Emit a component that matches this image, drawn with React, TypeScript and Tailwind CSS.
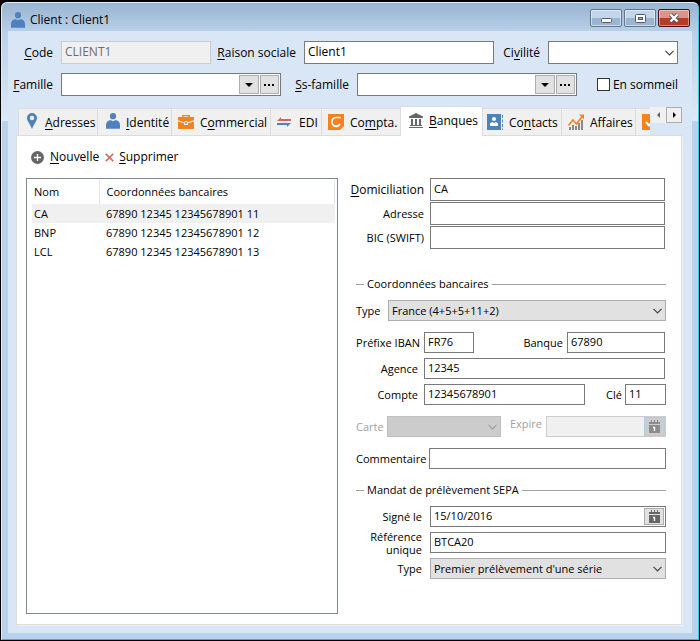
import { useState } from "react";
import type { InputHTMLAttributes, ReactNode } from "react";
import clsx from "clsx";

type IconProps = { className?: string };

function PersonIcon({ className }: IconProps) {
  return (
    <svg viewBox="0 0 14 16" className={clsx("shrink-0", className)} fill="#4f81bd">
      <circle cx="7" cy="3.2" r="3.1" />
      <path d="M0 15.8v-3.300Q0 8 3.500 7.200H5l2 1 2-1h1.500Q14 8 14 12.500v3.300z" />
    </svg>
  );
}

function PinIcon() {
  return (
    <svg viewBox="0 0 10 16" className="mb-1 h-4 w-2.5 shrink-0" fill="#4f81bd">
      <path
        fillRule="evenodd"
        d="M5 0a5 5 0 0 1 5 5c0 3-3 6-5 11C3 11 0 8 0 5a5 5 0 0 1 5-5zm0 2.800a2.200 2.200 0 1 0 0 4.400 2.200 2.200 0 0 0 0-4.400z"
      />
    </svg>
  );
}

function BriefcaseIcon() {
  return (
    <svg viewBox="0 0 16 14" className="mb-0.5 h-3.5 w-4 shrink-0" fill="#f58220">
      <path fillRule="evenodd" d="M0 2h4V0h8v2h4v3.200L9.500 7.200V6h-3v1.200L0 5.200zM5.500 1.200V2h5v-.8z" />
      <path d="M0 6.400l6 1.900V10h4V8.300l6-1.900V14H0z" />
      <path d="M7.200 7h1.600v2H7.200z" />
    </svg>
  );
}

function ArrowsIcon() {
  return (
    <svg viewBox="0 0 14 10" className="mb-0.5 h-2.5 w-3.5 shrink-0">
      <path d="M0 4 4 0v2h10v2z" fill="#d9625a" />
      <path d="M14 6l-4 4V8H0V6z" fill="#4f81bd" />
    </svg>
  );
}

function ComptaIcon() {
  return (
    <svg viewBox="0 0 16 16" className="mb-0.5 size-4 shrink-0">
      <path d="M0 0h16v12l-4 4H0z" fill="#f58220" />
      <path d="M13 3.500H8a4.400 4.400 0 1 0 4 6.500" fill="none" stroke="#fff" strokeWidth="1.700" />
    </svg>
  );
}

function BankIcon() {
  return (
    <svg viewBox="0 0 14 15" className="h-[15px] w-3.5 shrink-0" fill="#666">
      <path d="M7 0l7 3.500V5H0V3.500z" />
      <path d="M2 6h2v6H2zM6 6h2v6H6zM10 6h2v6h-2zM1 12h12v1H1zM0 14h14v1H0z" />
    </svg>
  );
}

function ContactsIcon() {
  return (
    <svg viewBox="0 0 16 16" className="mb-0.5 size-4 shrink-0">
      <path d="M0 0h14v16H0z" fill="#4f81bd" />
      <path d="M15.500 1v15" stroke="#4f81bd" strokeDasharray="3 1.500" />
      <circle cx="7" cy="5" r="2" fill="#fff" />
      <path d="M3 12V9.500L5 8l2 1 2-1 2 1.500V12z" fill="#fff" />
    </svg>
  );
}

function ChartIcon() {
  return (
    <svg viewBox="0 0 16 16" className="mb-0.5 size-4 shrink-0">
      <path d="M1 16v-3h2v3zM4 16v-5h2v5zM7 16v-4h2v4zM10 16V9h2v7zM13 16V6h2v10z" fill="#8a8a8a" />
      <path d="M.5 11.500 5 6l3.500 4L14.500 2" fill="none" stroke="#f58220" strokeWidth="1.600" />
      <path d="M11 .5h5v5z" fill="#f58220" />
    </svg>
  );
}

function CheckIcon() {
  return (
    <svg viewBox="0 0 16 16" className="mb-0.5 size-4 shrink-0">
      <path d="M0 0h16v16H0z" fill="#f58220" />
      <path d="M4 8l3 3.500L12.500 5" fill="none" stroke="#fff" strokeWidth="2" />
    </svg>
  );
}

function CalendarIcon() {
  return (
    <svg viewBox="0 0 11 13" className="h-[13px] w-[11px]">
      <path d="M0 2h11v2H0zM0 5h11v8H0z" fill="currentColor" />
      <path d="M2 0h1v3H2zM5 0h1v3H5zM8 0h1v3H8z" fill="currentColor" />
      <path d="M4 7.500h1.500V11" fill="none" stroke="#fff" strokeWidth="1.400" />
    </svg>
  );
}

function Chevron({ className }: IconProps) {
  return (
    <svg
      viewBox="0 0 9 6"
      className={clsx("pointer-events-none absolute top-1/2 right-1 h-1.5 w-[9px] -translate-y-1/2", className)}
      fill="none"
      stroke="currentColor"
      strokeWidth="1.200"
    >
      <path d="M.5.8l4 4 4-4" />
    </svg>
  );
}

// Label text with its accelerator letter between underscores: "_C_ode"
function Accel({ text }: { text: string }) {
  const [before, key, after] = text.split("_");
  if (key === undefined) return <>{text}</>;
  return (
    <>
      {before}
      <span className="underline underline-offset-2">{key}</span>
      {after}
    </>
  );
}

function TextBox({ className, ...props }: InputHTMLAttributes<HTMLInputElement>) {
  return (
    <input
      type="text"
      className={clsx(
        "min-w-0 border border-[#7a7a7a] bg-white px-[3px] pb-0.5 outline-none focus:border-[#0078d7] disabled:border-[#ccc] disabled:bg-[#f0f0f0] disabled:text-[#6d6d6d]",
        className
      )}
      {...props}
    />
  );
}

function LookupBox({ id }: { id: string }) {
  return (
    <div className="flex h-[23px] min-w-0 flex-1 items-center gap-px border border-[#7a7a7a] bg-white pr-px">
      <input id={id} type="text" className="h-full min-w-0 flex-1 px-[3px] outline-none" />
      <button aria-label="Dérouler" className="flex h-[19px] w-5 items-center justify-center border border-[#adadad] bg-[#e1e1e1]">
        <svg viewBox="0 0 8 4" className="h-1 w-2">
          <path d="M0 0h8L4 4z" />
        </svg>
      </button>
      <button aria-label="Parcourir" className="flex h-[19px] w-[19px] items-center justify-center border border-[#adadad] bg-[#e1e1e1]">
        <svg viewBox="0 0 10 2" className="h-0.5 w-2.5">
          <path d="M0 0h2v2H0zM4 0h2v2H4zM8 0h2v2H8z" />
        </svg>
      </button>
    </div>
  );
}

function Combo({ id, value, disabled, className }: { id: string; value: string; disabled?: boolean; className?: string }) {
  return (
    <div className={clsx("relative h-[21px]", className)}>
      <select
        id={id}
        disabled={disabled}
        className="block h-full w-full appearance-none border border-[#adadad] bg-[#e1e1e1] pr-4 pl-[3px] text-black opacity-100 outline-none disabled:border-[#bfbfbf] disabled:bg-[#ccc]"
      >
        <option>{value}</option>
      </select>
      <Chevron className={disabled ? "text-[#a0a0a0]" : "text-[#444]"} />
    </div>
  );
}

function DateBox({ id, value, disabled, className }: { id: string; value?: string; disabled?: boolean; className?: string }) {
  return (
    <div
      className={clsx(
        "flex h-[21px] min-w-0 items-center border",
        disabled ? "border-[#ccc] bg-[#f0f0f0]" : "border-[#7a7a7a] bg-white pr-px",
        className
      )}
    >
      <input
        id={id}
        type="text"
        defaultValue={value}
        disabled={disabled}
        className="h-full min-w-0 flex-1 px-[3px] pb-0.5 outline-none"
      />
      <button
        aria-label="Calendrier"
        disabled={disabled}
        className={clsx(
          "flex shrink-0 items-center justify-center border",
          disabled ? "h-[19px] w-[21px] border-[#b4cbe5] bg-[#ccc] text-[#8c8c8c]" : "h-[17px] w-5 border-[#adadad] bg-[#e1e1e1] text-[#666]"
        )}
      >
        <CalendarIcon />
      </button>
    </div>
  );
}

function Field({ id, label, children, labelClass, className }: {
  id: string;
  label: string;
  children: ReactNode;
  labelClass?: string;
  className?: string;
}) {
  return (
    <div className={clsx("flex items-center", className)}>
      <label htmlFor={id} className={clsx("shrink-0", labelClass)}>
        <Accel text={label} />
      </label>
      {children}
    </div>
  );
}

function GroupTitle({ children }: { children: ReactNode }) {
  return (
    <h2 className="flex items-center gap-[3px] pl-2 leading-4">
      <span className="h-px w-2 bg-[#a0a0a0]" />
      {children}
      <span className="h-px flex-1 bg-[#a0a0a0]" />
    </h2>
  );
}

const tabs = [
  { id: "adresses", label: "_A_dresses", icon: <PinIcon />, size: "w-[79px] pl-2 gap-2" },
  { id: "identite", label: "_I_dentité", icon: <PersonIcon className="mb-1 h-4 w-3.5" />, size: "w-[74px] pl-2 gap-1.5" },
  { id: "commercial", label: "C_o_mmercial", icon: <BriefcaseIcon />, size: "w-[99px] pl-1.5 gap-1.5" },
  { id: "edi", label: "EDI", icon: <ArrowsIcon />, size: "w-[51px] pl-1.5 gap-2" },
  { id: "compta", label: "Co_m_pta.", icon: <ComptaIcon />, size: "w-[79px] pl-1.5 gap-1.5" },
  { id: "banques", label: "_B_anques", icon: <BankIcon />, size: "w-[82px] pl-2 gap-1.5" },
  { id: "contacts", label: "Co_n_tacts", icon: <ContactsIcon />, size: "w-[79px] pl-1 gap-1.5" },
  { id: "affaires", label: "Affaires", icon: <ChartIcon />, size: "w-[74px] pl-1.5 gap-1.5" },
  { id: "taches", label: "", icon: <CheckIcon />, size: "w-[79px] pl-1.5 gap-1.5" },
];

const banks = [
  { name: "CA", account: "67890 12345 12345678901 11" },
  { name: "BNP", account: "67890 12345 12345678901 12" },
  { name: "LCL", account: "67890 12345 12345678901 13" },
];

function TitleBar() {
  const plain = "border-[#5f7590] bg-linear-to-b from-[#c3d5e9] from-50% to-[#9bb5d1] to-50%";
  return (
    <header className="flex h-7 items-center pt-1.5 pr-2 pl-[9px]">
      <PersonIcon className="h-4 w-3.5" />
      <h1 className="ml-[5px] flex-1">Client : Client1</h1>
      <div className="flex gap-0.5 self-start">
        <button aria-label="Réduire" className={clsx("flex h-[18px] w-8 items-center justify-center rounded-xs border inset-ring inset-ring-white/50", plain)}>
          <svg viewBox="0 0 11 5" className="mt-1 h-[5px] w-[11px]">
            <rect x=".5" y=".5" width="10" height="4" rx="1" fill="#fff" stroke="#535666" />
          </svg>
        </button>
        <button aria-label="Agrandir" className={clsx("flex h-[18px] w-8 items-center justify-center rounded-xs border inset-ring inset-ring-white/50", plain)}>
          <svg viewBox="0 0 11 9" className="h-[9px] w-[11px]">
            <rect x=".5" y=".5" width="10" height="8" rx="1" fill="#fff" stroke="#535666" />
            <rect x="3.500" y="3.500" width="4" height="2" fill="#9bb5d1" stroke="#535666" />
          </svg>
        </button>
        <button
          aria-label="Fermer"
          className="flex h-[18px] w-8 items-center justify-center rounded-xs border border-[#4c1216] bg-linear-to-b from-[#dc9488] from-50% to-[#b93a25] to-50% inset-ring inset-ring-white/40"
        >
          <svg viewBox="0 0 12 10" className="h-2.5 w-3">
            <path d="M2.500 1.500l7 7M9.500 1.500l-7 7" stroke="#535666" strokeWidth="4.400" />
            <path d="M2.500 1.500l7 7M9.500 1.500l-7 7" stroke="#fff" strokeWidth="2.400" />
          </svg>
        </button>
      </div>
    </header>
  );
}

export default function App() {
  const [tab, setTab] = useState("banques");
  const [selected, setSelected] = useState("CA");

  return (
    <div className="flex min-h-screen flex-col bg-black p-px pt-0.5 font-['Open_Sans','Noto_Sans',sans-serif] text-[12px] leading-4 whitespace-nowrap text-black">
      <div className="flex flex-1 flex-col rounded-t-md border border-t-[#e4edf7] border-r-[#35cbe4] border-b-[#35b4d8] border-l-[#e4edf7] bg-[#b9d1ea] bg-[linear-gradient(to_bottom,#99b4d1_0,#b9d1ea_30px,#dce9f7_118px,#b9d1ea_118px)] px-1.5 pb-1.5">
        <div className="-mx-1.5">
          <TitleBar />
        </div>

        <main className="flex flex-1 flex-col bg-[#d9e6f6] pt-2.5 pr-2.5 pb-2 pl-2">
          <div className="flex flex-col gap-[9px] pr-1">
            <div className="flex items-center">
              <Field id="code" label="_C_ode" labelClass="w-[45px] pr-2 text-right">
                <TextBox id="code" disabled defaultValue="CLIENT1" className="h-[23px] w-[150px]" />
              </Field>
              <Field id="raison" label="_R_aison sociale" labelClass="w-[93px] pr-2 text-right" className="flex-1">
                <TextBox id="raison" defaultValue="Client1" className="h-[23px] flex-1" />
              </Field>
              <Field id="civilite" label="Ci_v_ilité" labelClass="w-[54px] pr-2 text-right">
                <div className="relative h-[23px] w-[130px]">
                  <select id="civilite" className="block h-full w-full appearance-none border border-[#7a7a7a] bg-white outline-none">
                    <option></option>
                  </select>
                  <Chevron className="text-[#444]" />
                </div>
              </Field>
            </div>
            <div className="flex items-center">
              <Field id="famille" label="_F_amille" labelClass="-ml-1 w-[49px] pr-2 text-right" className="min-w-0 flex-[265]">
                <LookupBox id="famille" />
              </Field>
              <Field id="ssfamille" label="_S_s-famille" labelClass="w-[76px] pr-2 text-right" className="min-w-0 flex-[296]">
                <LookupBox id="ssfamille" />
              </Field>
              <label className="ml-5 flex items-center gap-[3px]">
                <input type="checkbox" className="size-[13px] appearance-none border border-[#333] bg-white checked:bg-[#333]" />
                En sommeil
              </label>
            </div>
          </div>

          {/* Tabs */}
          <div className="relative z-10 mt-2.5 -mb-px flex h-[30px] items-start pl-0.5">
            <div role="tablist" className="flex h-full min-w-0 flex-1 items-end overflow-hidden">
              {tabs.map((t) => (
                <button
                  key={t.id}
                  role="tab"
                  aria-selected={t.id === tab}
                  aria-label={t.label ? undefined : "Tâches"}
                  onClick={() => setTab(t.id)}
                  className={clsx(
                    "flex shrink-0 items-center border-t border-l border-[#dcdcdc]",
                    t.id === tab ? "h-[30px] bg-white pb-0.5" : "h-7 border-b bg-[#f0f0f0] pt-0.5",
                    t.size
                  )}
                >
                  {t.icon}
                  <span>
                    <Accel text={t.label} />
                  </span>
                </button>
              ))}
            </div>
            <div className="mt-px flex">
              <button aria-label="Onglets précédents" className="flex size-4 items-center justify-center bg-[#f0f0f0]">
                <svg viewBox="0 0 3 6" className="h-1.5 w-[3px]" fill="#666">
                  <path d="M3 0v6L0 3z" />
                </svg>
              </button>
              <button aria-label="Onglets suivants" className="flex size-4 items-center justify-center border border-[#adadad] bg-[#f0f0f0]">
                <svg viewBox="0 0 3 6" className="h-1.5 w-[3px]">
                  <path d="M0 0v6l3-3z" />
                </svg>
              </button>
            </div>
          </div>

          <section className="flex flex-1 flex-col border border-[#dcdcdc] bg-white pt-[13px] pr-[15px] pb-2.5 pl-[9px] shadow-[1px_1px_0_#f0f0f0]">
            <div className="flex items-center gap-1.5 pl-[5px]">
              <button className="flex items-center gap-1.5">
                <svg viewBox="0 0 13 13" className="size-[13px]">
                  <circle cx="6.500" cy="6.500" r="6.500" fill="#666" />
                  <path d="M6.500 3v7M3 6.500h7" stroke="#fff" strokeWidth="1.300" />
                </svg>
                <span>
                  <Accel text="_N_ouvelle" />
                </span>
              </button>
              <button className="flex items-center gap-[5px]">
                <svg viewBox="0 0 9 9" className="size-[9px]">
                  <path d="M.7.7l7.600 7.600M8.300.7.7 8.300" stroke="#d9625a" strokeWidth="1.600" />
                </svg>
                <span>
                  <Accel text="_S_upprimer" />
                </span>
              </button>
            </div>

            <div className="mt-[13px] grid flex-1 grid-cols-[312fr_318fr] gap-2.5">
              {/* Bank accounts */}
              <div className="border border-[#828790] py-px pr-0.5 pl-[5px]">
                <table className="w-full border-collapse text-left text-[11px]">
                  <thead>
                    <tr className="h-6 border-b border-[#f0f0f0]">
                      <th className="w-[67px] border-r border-[#e5e5e5] pl-0.5 font-normal">Nom</th>
                      <th className="border-r border-[#e5e5e5] pl-[7px] font-normal">Coordonnées bancaires</th>
                    </tr>
                  </thead>
                  <tbody>
                    {banks.map((bank) => (
                      <tr
                        key={bank.name}
                        onClick={() => setSelected(bank.name)}
                        className={clsx("h-[19px]", bank.name === selected && "bg-[#f0f0f0]")}
                      >
                        <td className="pl-0.5">{bank.name}</td>
                        <td className="pl-[7px]">{bank.account}</td>
                      </tr>
                    ))}
                  </tbody>
                </table>
              </div>

              {/* Details */}
              <form className="flex min-w-0 flex-col text-[11px]">
                <div className="flex flex-col gap-px pr-px">
                  <Field id="domiciliation" label="_D_omiciliation" labelClass="w-[82px] pr-1.5 text-right text-[12px]">
                    <TextBox id="domiciliation" defaultValue="CA" className="h-[23px] flex-1" />
                  </Field>
                  <Field id="adresse" label="Adresse" labelClass="w-[82px] pr-1.5 text-right">
                    <TextBox id="adresse" className="h-[23px] flex-1" />
                  </Field>
                  <Field id="bic" label="BIC (SWIFT)" labelClass="w-[82px] pr-1.5 text-right">
                    <TextBox id="bic" className="h-[23px] flex-1" />
                  </Field>
                </div>

                <div className="mt-[27px]">
                  <GroupTitle>Coordonnées bancaires</GroupTitle>
                </div>
                <div className="mt-2 flex flex-col gap-[5px] pl-2">
                  <Field id="type" label="Type" labelClass="w-8" className="mb-1.5">
                    <Combo id="type" value="France (4+5+5+11+2)" className="flex-1" />
                  </Field>
                  <div className="flex justify-between pr-px">
                    <Field id="iban" label="Préfixe IBAN" labelClass="w-[68px] pr-1 text-right">
                      <TextBox id="iban" defaultValue="FR76" className="h-[21px] w-[50px]" />
                    </Field>
                    <Field id="banque" label="Banque" labelClass="pr-1">
                      <TextBox id="banque" defaultValue="67890" className="h-[21px] w-[98px]" />
                    </Field>
                  </div>
                  <Field id="agence" label="Agence" labelClass="w-[68px] pr-1.5 text-right" className="pr-px">
                    <TextBox id="agence" defaultValue="12345" className="h-[21px] flex-1" />
                  </Field>
                  <div className="flex">
                    <Field id="compte" label="Compte" labelClass="w-[68px] pr-1.5 text-right" className="flex-1">
                      <TextBox id="compte" defaultValue="12345678901" className="h-[21px] flex-1" />
                    </Field>
                    <Field id="cle" label="Clé" labelClass="w-10 pr-[3px] text-right">
                      <TextBox id="cle" defaultValue="11" className="h-[21px] w-[41px]" />
                    </Field>
                  </div>
                  <div className="mt-1.5 flex items-start text-[#a0a0a0]">
                    <Field id="carte" label="Carte" labelClass="w-[31px]">
                      <Combo id="carte" value="" disabled className="w-[114px]" />
                    </Field>
                    <label htmlFor="expire" className="w-[45px] shrink-0 pr-1 text-right">
                      Expire
                    </label>
                    <DateBox id="expire" disabled className="flex-1" />
                  </div>
                  <Field id="commentaire" label="Commentaire" labelClass="w-[73px]" className="mt-1.5">
                    <TextBox id="commentaire" className="h-[21px] flex-1" />
                  </Field>
                </div>

                <div className="mt-[13px]">
                  <GroupTitle>Mandat de prélèvement SEPA</GroupTitle>
                </div>
                <div className="mt-2 flex flex-col gap-[5px] leading-[13px]">
                  <Field id="signe" label="Signé le" labelClass="w-[82px] pr-2 text-right">
                    <DateBox id="signe" value="15/10/2016" className="flex-1" />
                  </Field>
                  <Field id="reference" label="Référence unique" labelClass="-my-1 w-[82px] pr-2 pl-4 text-right whitespace-normal">
                    <TextBox id="reference" defaultValue="BTCA20" className="h-[21px] flex-1" />
                  </Field>
                  <Field id="typeMandat" label="Type" labelClass="w-[82px] pr-2 text-right">
                    <Combo id="typeMandat" value="Premier prélèvement d'une série" className="flex-1" />
                  </Field>
                </div>
              </form>
            </div>
          </section>
        </main>
      </div>
    </div>
  );
}
